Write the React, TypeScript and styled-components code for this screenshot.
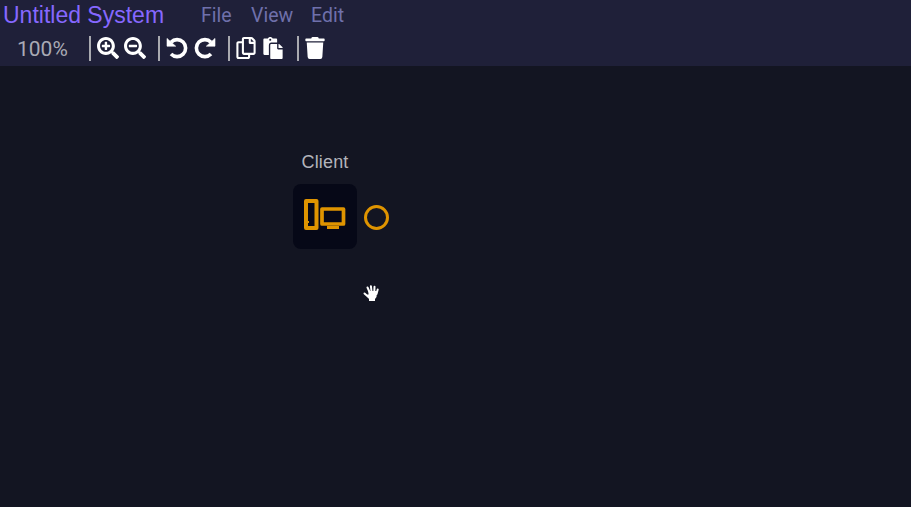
import React from "react";
import styled, { createGlobalStyle } from "styled-components";
import { FaSearchPlus, FaSearchMinus, FaRegCopy, FaPaste, FaTrash } from "react-icons/fa";

const GlobalStyle = createGlobalStyle`
  * { box-sizing: border-box; }
  body { margin: 0; background: #131522; overflow: hidden; }
`;

const Page = styled.div`
  display: flex;
  flex-direction: column;
  height: 100vh;
`;

const Header = styled.header`
  height: 66px;
  flex: none;
  background: #1f2039;
`;

const MenuRow = styled.nav`
  display: flex;
  align-items: center;
  height: 31px;
  padding-left: 3px;
`;

const Title = styled.h1`
  margin: 0;
  width: 198px;
  height: 31px;
  font: 400 23px/31px "Liberation Sans", Arial, sans-serif;
  color: #8668ff;
  white-space: nowrap;
`;

const MenuItem = styled.button<{ $width: number }>`
  width: ${(p) => p.$width}px;
  padding: 0;
  border: 0;
  background: none;
  text-align: left;
  font: 400 19.5px/31px Roboto, sans-serif;
  color: #6f70ab;
`;

const ToolRow = styled.div`
  display: flex;
  align-items: center;
  height: 35px;
  padding-left: 17px;
`;

const Zoom = styled.span`
  width: 72px;
  font: 400 21px/34px Roboto, sans-serif;
  color: #a9aab5;
`;

const ToolGroup = styled.div<{ $width: number; $inset?: number; $gap?: number }>`
  display: flex;
  align-items: center;
  gap: ${(p) => p.$gap ?? 5}px;
  width: ${(p) => p.$width}px;
  height: 25px;
  padding: 0 0 1px ${(p) => p.$inset ?? 6}px;
  border-left: 2px solid #a9aab0;
`;

const Tool = styled.button`
  display: flex;
  justify-content: center;
  width: 22px;
  padding: 0;
  border: 0;
  background: none;
  color: #fff;
  font-size: 22px;
`;

const RotateIcon = styled.svg<{ $flip?: boolean }>`
  flex: none;
  transform: ${(p) => (p.$flip ? "scaleX(-1)" : "none")};
`;

const Canvas = styled.main`
  position: relative;
  flex: 1;
`;

const Node = styled.div`
  position: absolute;
  left: 293px;
  top: 84px;
  width: 64px;
  display: flex;
  flex-direction: column;
  align-items: center;
`;

const NodeLabel = styled.span`
  height: 34px;
  font: 400 18px/24px "Liberation Sans", Arial, sans-serif;
  letter-spacing: 0.15px;
  color: #b3b4bb;
`;

const NodeBox = styled.div`
  width: 64px;
  height: 65px;
  border-radius: 8px;
  background: #060817;
`;

const Port = styled.div`
  position: absolute;
  left: 364px;
  top: 139px;
  width: 25px;
  height: 25px;
  border: 3px solid #df9400;
  border-radius: 50%;
`;

const Cursor = styled.svg`
  position: absolute;
  left: 362px;
  top: 218px;
`;

const Rotate = ({ flip }: { flip?: boolean }) => (
  <RotateIcon $flip={flip} width="22" height="22" viewBox="0 0 22 22" fill="none">
    <path d="M5 5.2A8.500 8.500 0 1 1 5 17" stroke="#fff" strokeWidth="3.6" />
    <path d="M1 1.400V9.200H9.700Z" fill="#fff" stroke="#fff" strokeWidth=".6" strokeLinejoin="round" />
  </RotateIcon>
);

const ClientIcon = () => (
  <svg width="64" height="65" viewBox="0 0 64 65" fill="none" stroke="#df9400" strokeWidth="4" strokeLinejoin="round">
    <rect x="13" y="17" width="10.5" height="27" />
    <path d="M15 38h1" strokeWidth="2" />
    <rect x="29" y="25" width="21.5" height="15" strokeWidth="3.7" />
    <path d="M34 43.500h12" strokeWidth="3" />
  </svg>
);

export default function App() {
  return (
    <Page>
      <GlobalStyle />
      <Header>
        <MenuRow>
          <Title>Untitled System</Title>
          <MenuItem $width={50}>File</MenuItem>
          <MenuItem $width={60}>View</MenuItem>
          <MenuItem $width={50}>Edit</MenuItem>
        </MenuRow>
        <ToolRow>
          <Zoom>100%</Zoom>
          <ToolGroup $width={69}>
            <Tool aria-label="Zoom in"><FaSearchPlus /></Tool>
            <Tool aria-label="Zoom out"><FaSearchMinus /></Tool>
          </ToolGroup>
          <ToolGroup $width={70} $gap={6}>
            <Tool aria-label="Undo"><Rotate /></Tool>
            <Tool aria-label="Redo"><Rotate flip /></Tool>
          </ToolGroup>
          <ToolGroup $width={69} $inset={5}>
            <Tool aria-label="Copy"><FaRegCopy /></Tool>
            <Tool aria-label="Paste"><FaPaste /></Tool>
          </ToolGroup>
          <ToolGroup $width={40} $inset={5}>
            <Tool aria-label="Delete"><FaTrash /></Tool>
          </ToolGroup>
        </ToolRow>
      </Header>
      <Canvas>
        <Node>
          <NodeLabel>Client</NodeLabel>
          <NodeBox><ClientIcon /></NodeBox>
        </Node>
        <Port />
        <Cursor width="18" height="18" viewBox="0 0 18 18">
          <path d="M5.500 3.500 7.500 8 M8.900 2.200 9.600 8 M12.500 2.800 12.300 8 M15.700 5.500 14.500 10 M2.500 9.500 6 12.500" stroke="#fff" strokeWidth="2" strokeLinecap="round" />
          <path d="M6.500 7h8.500l-.5 6-1.500 2v2H7V15L3.500 11 6.500 10.500z" fill="#fff" />
        </Cursor>
      </Canvas>
    </Page>
  );
}
